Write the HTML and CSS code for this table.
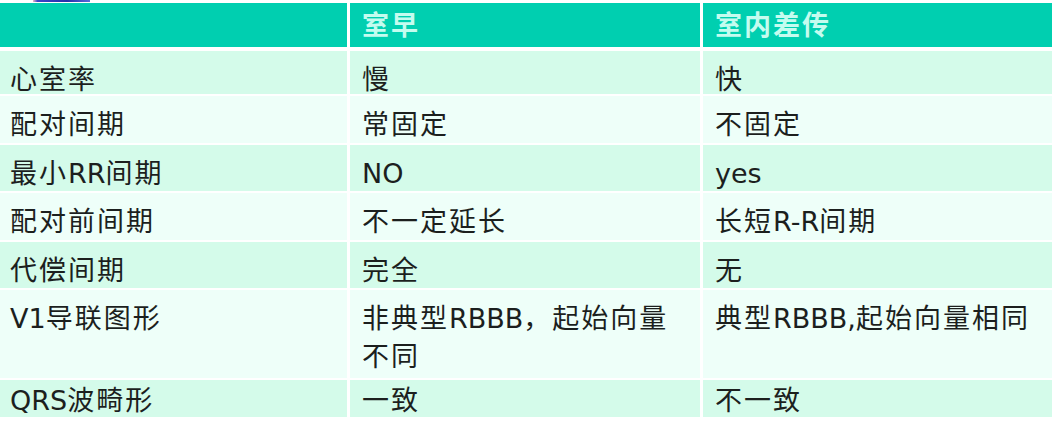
FILE: index.html
```html
<!DOCTYPE html>
<html lang="zh">
<head>
<meta charset="utf-8">
<title>室早与室内差传</title>
<link rel="stylesheet" href="styles.css">
</head>
<body>
<div class="topstrip"><span class="sliver"></span></div>
<div class="table">
  <div class="cell head"></div>
  <div class="cell head">室早</div>
  <div class="cell head">室内差传</div>

  <div class="cell odd r1">心室率</div>
  <div class="cell odd r1">慢</div>
  <div class="cell odd r1">快</div>

  <div class="cell even">配对间期</div>
  <div class="cell even">常固定</div>
  <div class="cell even">不固定</div>

  <div class="cell odd">最小<span class="lat">RR</span>间期</div>
  <div class="cell odd"><span class="lat">NO</span></div>
  <div class="cell odd"><span class="lat">yes</span></div>

  <div class="cell even">配对前间期</div>
  <div class="cell even">不一定延长</div>
  <div class="cell even">长短<span class="lat">R-R</span>间期</div>

  <div class="cell odd">代偿间期</div>
  <div class="cell odd">完全</div>
  <div class="cell odd">无</div>

  <div class="cell even"><span class="lat">V1</span>导联图形</div>
  <div class="cell even">非典型<span class="lat">RBBB</span>，起始向量<br>不同</div>
  <div class="cell even">典型<span class="lat">RBBB,</span>起始向量相同</div>

  <div class="cell odd last"><span class="lat">QRS</span>波畸形</div>
  <div class="cell odd last">一致</div>
  <div class="cell odd last">不一致</div>
</div>
</body>
</html>
```

FILE: styles.css
```css
html, body {
  margin: 0;
  padding: 0;
  background: #ffffff;
  overflow: hidden;
}

body {
  width: 1057px;
  height: 421px;
  font-family: "DejaVu Sans", "Noto Sans CJK SC", sans-serif;
  color: #1c1f1e;
}

.topstrip {
  height: 3px;
  display: flex;
  align-items: flex-start;
}

.sliver {
  display: block;
  margin-left: 33px;
  width: 57px;
  height: 2px;
  background: linear-gradient(90deg, #e9b7c6 0, #3d44c8 8%, #2530a8 60%, #5a6ad8 100%);
}

.table {
  margin-left: -2px;
  display: grid;
  grid-template-columns: 349px 350px 349px;
  grid-template-rows: 44px 45px 47px 46px 47px 46px 88px 37px;
  column-gap: 3px;
  row-gap: 2px;
}

.cell {
  padding: 10px 0 0 12px;
  font-size: 27px;
  line-height: 38px;
  letter-spacing: 2px;
  box-sizing: border-box;
}

.lat {
  letter-spacing: 0;
}

.head {
  background: #00cfb0;
  color: #c4fcef;
  font-weight: bold;
  padding-top: 4px;
}

.table .r1 {
  margin-top: 2px;
}

.odd {
  background: #d4fbea;
}

.even {
  background: #eefff9;
}

.table .last {
  padding-top: 2px;
}
```
